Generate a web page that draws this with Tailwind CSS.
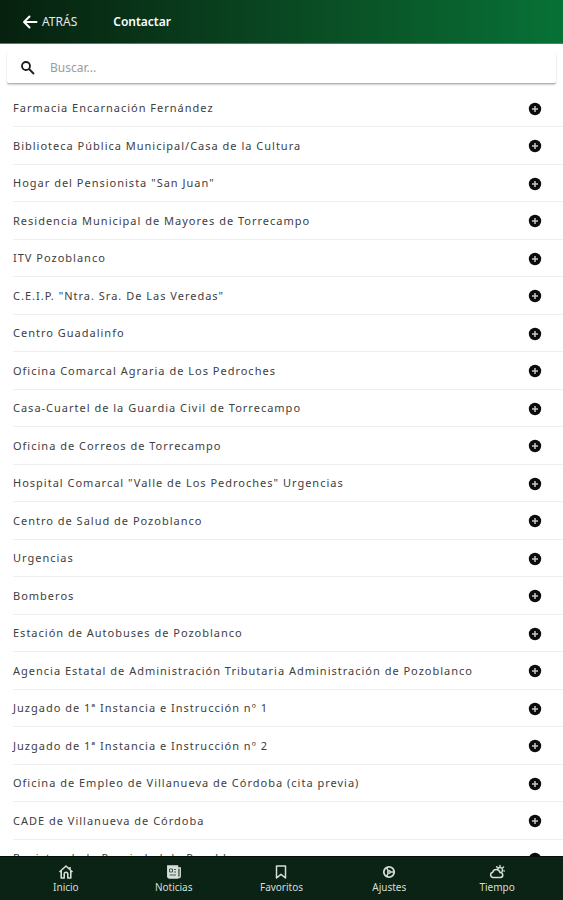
<!DOCTYPE html>
<html lang="es">
<head>
  <meta charset="UTF-8" />
  <meta name="viewport" content="width=device-width, initial-scale=1.0"/>
  <title>Contactar</title>
  <script src="https://cdn.jsdelivr.net/npm/@tailwindcss/browser@4"></script>
</head>
<body class="h-screen flex flex-col bg-white font-['Noto_Sans','Open_Sans',sans-serif] overflow-hidden">
  <header class="h-11 shrink-0 flex items-center gap-9 px-[22px] border-b border-[#5c7a66] bg-linear-to-r from-[#06210f] to-[#077236] text-white">
    <button type="button" class="flex items-center gap-1 text-[12px] text-gray-200">
      <svg class="size-4" viewBox="0 0 16 16" fill="none" stroke="white" stroke-width="2" stroke-linecap="round" stroke-linejoin="round">
        <path d="M14.500 8H2M7.500 2.500L2 8l5.500 5.500"/>
      </svg>
      ATRÁS
    </button>
    <h1 class="text-[12px] font-semibold">Contactar</h1>
  </header>

  <!-- Search -->
  <div class="shrink-0 px-[7px] pt-2">
    <label class="h-8 flex items-center gap-[14px] px-[13px] rounded-xs bg-white border-b border-[#b5b5b5] shadow-[0_1px_2px_rgba(0,0,0,0.2)]">
      <svg class="size-4" viewBox="0 0 16 16" fill="none" stroke="#1c1c1c" stroke-width="1.800">
        <circle cx="6" cy="6" r="4"/>
        <path d="M9 9l5 5"/>
      </svg>
      <input type="search" aria-label="Buscar" placeholder="Buscar..." class="flex-1 min-w-0 text-[12px] outline-none placeholder:text-[#9b9b9b]">
    </label>
  </div>

  <main class="flex-1 min-h-0 overflow-hidden pt-[6px] pl-[13px]">
    <ul id="contacts" class="grid auto-rows-[37px_38px] text-[11px] tracking-[1px] text-[#404040]"></ul>
  </main>

  <nav class="h-11 shrink-0 grid grid-cols-5 px-3 bg-[#0a2314] border-t border-[#04110a] text-[10px] leading-[14px] text-[#d5ded8]">
    <a href="#inicio" class="flex flex-col items-center pt-[7px]">
      <svg class="size-4" viewBox="0 0 16 16" fill="none" stroke="currentColor" stroke-width="1.600" stroke-linejoin="round">
        <path d="M1.500 8L8 2l6.500 6M12 3v3M3.200 7v7h3v-4a1.800 1.800 0 0 1 3.600 0v4h3V7"/>
      </svg>
      Inicio
    </a>
    <a href="#noticias" class="flex flex-col items-center pt-[7px]">
      <svg class="size-4" viewBox="0 0 16 16" fill="none" stroke="currentColor" stroke-width="1.500">
        <path d="M1.800 2h9.700v12H3.300a1.500 1.500 0 0 1-1.500-1.500z" fill="currentColor"/>
        <path d="M11.500 4h2.700v8.500a1.400 1.400 0 0 1-2.700 0z"/>
        <path d="M3.500 5h3v3h-3zM8 5.500h2M8 8h2M3.500 11h6.500" stroke="#0a2314" stroke-width="0.700"/>
      </svg>
      Noticias
    </a>
    <a href="#favoritos" class="flex flex-col items-center pt-[7px]">
      <svg class="size-4" viewBox="0 0 16 16" fill="none" stroke="currentColor" stroke-width="1.500" stroke-linejoin="round">
        <path d="M3.500 2h9v12L8 10.300 3.500 14z"/>
      </svg>
      Favoritos
    </a>
    <a href="#ajustes" class="flex flex-col items-center pt-[7px]">
      <svg class="size-4" viewBox="0 0 16 16" fill="none" stroke="currentColor" stroke-width="1.500">
        <circle cx="8" cy="8" r="5.200" stroke-width="1.800"/>
        <circle cx="8" cy="8" r="1.300"/>
        <path d="M9.500 8h3.500M7.200 6.700L5.500 3.700M7.200 9.300l-1.700 3"/>
      </svg>
      Ajustes
    </a>
    <a href="#tiempo" class="flex flex-col items-center pt-[7px]">
      <svg class="size-4" viewBox="0 0 16 16" fill="none" stroke="currentColor" stroke-width="1.500" stroke-linecap="round">
        <path d="M4 13.500a2.700 2.700 0 0 1-.3-5.300A3.800 3.800 0 0 1 11 8.500a2.500 2.500 0 0 1 .5 5z"/>
        <path d="M9 4.500a2.500 2.500 0 0 1 4 3M11 1.500v.5M14.500 3l-.5.500M15 7h.3M7.700 2.800l.4.500"/>
      </svg>
      Tiempo
    </a>
  </nav>

  <script>
    const contacts = [
      'Farmacia Encarnación Fernández',
      'Biblioteca Pública Municipal/Casa de la Cultura',
      'Hogar del Pensionista "San Juan"',
      'Residencia Municipal de Mayores de Torrecampo',
      'ITV Pozoblanco',
      'C.E.I.P. "Ntra. Sra. De Las Veredas"',
      'Centro Guadalinfo',
      'Oficina Comarcal Agraria de Los Pedroches',
      'Casa-Cuartel de la Guardia Civil de Torrecampo',
      'Oficina de Correos de Torrecampo',
      'Hospital Comarcal "Valle de Los Pedroches" Urgencias',
      'Centro de Salud de Pozoblanco',
      'Urgencias',
      'Bomberos',
      'Estación de Autobuses de Pozoblanco',
      'Agencia Estatal de Administración Tributaria Administración de Pozoblanco',
      'Juzgado de 1ª Instancia e Instrucción nº 1',
      'Juzgado de 1ª Instancia e Instrucción nº 2',
      'Oficina de Empleo de Villanueva de Córdoba (cita previa)',
      'CADE de Villanueva de Córdoba',
      'Registro de la Propiedad de Pozoblanco'
    ];

    document.getElementById('contacts').innerHTML = contacts.map(name => `
      <li class="flex items-center justify-between pt-px pr-[21px] border-b border-[#efefef]">
        <span>${name}</span>
        <button type="button" aria-label="Ver ${name.replace(/"/g, '&quot;')}">
          <svg class="size-[14px]" viewBox="0 0 14 14">
            <circle cx="7" cy="7" r="6.200" fill="#0c0c0c"/>
            <path d="M7 4v6M4 7h6" stroke="#c4ccc8" stroke-width="1.500"/>
          </svg>
        </button>
      </li>`).join('');
  </script>
</body>
</html>
